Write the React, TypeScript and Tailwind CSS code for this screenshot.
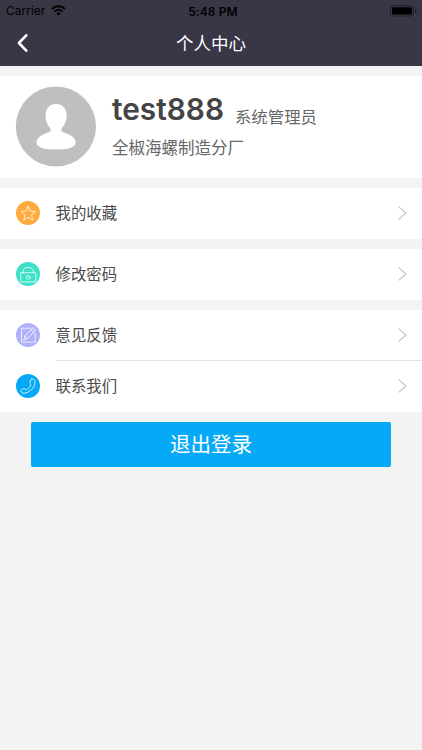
import { JSX, ReactNode } from "react";

type MenuRowProps = {
  label: string,
  color: string,
  icon: ReactNode,
};

function StatusBar() {
  return (
    <div className="flex h-[21px] items-center justify-between pl-1.5 pr-[5px] text-black">
      <div className="flex basis-1/3 items-center gap-1.5">
        <span className="pt-px text-[11.800px] leading-[21px] tracking-[0.1px]">Carrier</span>
        <svg className="h-[11px] w-[15px]" viewBox="0 0 15 11" fill="none" stroke="currentColor">
          <path d="M1 4a9.2 9.2 0 0 1 13 0" strokeWidth="2" />
          <path d="M3.5 6.5a5.7 5.7 0 0 1 8 0" strokeWidth="1.8" />
          <path d="M7.5 10.6 5.2 8.4a3.3 3.3 0 0 1 4.6 0Z" fill="currentColor" stroke="none" />
        </svg>
      </div>
      <span className="pl-[3px] pt-px text-[12px] font-semibold leading-[21px] tracking-[0.1px]">5:48 PM</span>
      <div className="flex basis-1/3 justify-end">
        <svg className="h-[12px] w-[27px]" viewBox="0 0 27 12">
          <rect x="0.5" y="0.8" width="23" height="10.2" rx="2.5" fill="none" stroke="#211f29" />
          <rect x="2" y="2.3" width="20" height="7.2" rx="1.2" fill="#000" />
          <path d="M25 4v4c1-.4 1.6-1.1 1.6-2S26 4.400 25 4Z" fill="#211f29" />
        </svg>
      </div>
    </div>
  )
}

function Header() {
  return (
    <header className="h-[65.500px] bg-[#393645]">
      <StatusBar />
      <div className="grid h-[44px] grid-cols-[60px_1fr_60px] items-center">
        <svg className="ml-[17px] h-[20px] w-[12px]" viewBox="0 0 12 20" fill="none" stroke="#fff" strokeWidth="2.6" strokeLinecap="round" strokeLinejoin="round">
          <path d="M9.300 2.300 1.900 10l7.400 7.700" />
        </svg>
        <h1 className="h-[44px] pt-px text-center text-[17.500px] leading-[44px] text-white">个人中心</h1>
      </div>
    </header>
  )
}

function Avatar() {
  return (
    <svg className="h-[81px] w-[81px] shrink-0" viewBox="0 0 81 81">
      <circle cx="40.900" cy="40.500" r="40.100" fill="#bfbfbf" />
      <path
        d="M41 18C34.500 18 30.500 22.700 30.500 29.500c0 5.500 1.800 9.200 4.300 12.300 1.500 2 1.200 3.600-.8 4.400C27.500 48.300 21.500 50.800 21.500 56.800c0 4.800 8 6.800 19.500 6.800S60.700 61.600 60.700 56.800c0-6-6.200-8.500-12.700-10.600-2-.8-2.300-2.400-.8-4.400 2.500-3.100 4.500-6.800 4.500-12.300C51.700 22.700 47.500 18 41 18Z"
        fill="#fff"
      />
    </svg>
  )
}

function Profile() {
  return (
    <section className="flex h-[102px] items-center gap-[16px] bg-white pl-[15px]">
      <Avatar />
      <div>
        <div className="flex items-end gap-[11px]">
          <span className="text-[29.800px] font-semibold leading-[39px] text-[#444]">test888</span>
          <span className="pb-px text-[16.400px] leading-[22px] text-[#666]">系统管理员</span>
        </div>
        <p className="mb-1 mt-[7px] text-[16.500px] leading-[24px] text-[#666]">全椒海螺制造分厂</p>
      </div>
    </section>
  )
}

function MenuRow({label, color, icon}: MenuRowProps) {
  return (
    <div className="flex h-[51px] items-center bg-white pl-[15.500px] pr-[15px]">
      <div className={`flex size-[24.500px] items-center justify-center rounded-full ${color}`}>
        <svg className="size-[24.500px]" viewBox="0 0 25 25" fill="none" stroke="#fff" strokeOpacity="0.8" strokeWidth="1" strokeLinejoin="round" strokeLinecap="round">
          {icon}
        </svg>
      </div>
      <span className="ml-[15.500px] grow pt-[2px] text-[15.400px] leading-[24px] text-[#4a4a4a]">{label}</span>
      <svg className="h-[14px] w-[9px]" viewBox="0 0 9 14" fill="none" stroke="#c3c4c8" strokeWidth="1.200">
        <path d="m.6.600 7.400 6.400-7.400 6.400" />
      </svg>
    </div>
  )
}

const starIcon: JSX.Element = (
  <path d="m12.500 5.500 2.100 4.800 5.200.5-3.900 3.500 1.100 5.100-4.500-2.600L8 19.400l1.100-5.100-3.900-3.500 5.200-.5Z" />
)

const lockIcon: JSX.Element = (
  <>
    <rect x="4.800" y="11" width="15.400" height="9.300" rx="0.600" />
    <path d="M7.300 11V9.500c0-2.500 2-4 5.200-4s5.200 1.500 5.200 4V11" />
    <circle cx="12.500" cy="15.700" r="1.900" />
  </>
)

const editIcon: JSX.Element = (
  <>
    <path d="M14.500 5.300H5.600v14.200h14V10.500" />
    <path d="m8.200 17 .9-3.800 8.300-8.600 2.700 2.600-8.200 8.700L8.200 17Z" />
    <path d="m15.400 6.700 2.700 2.600M9.100 13.200l2.800 2.700" />
  </>
)

const phoneIcon: JSX.Element = (
  <path d="M15.900 5.200c1.100-.6 2.700 0 3.200 1.300.9 2.900-.4 6.500-3 9.100-2.700 2.700-6.200 4.500-9 3.900-1.500-.3-2.600-1.900-2.100-3 .4-.9 3.100-1.900 4.100-1.400.7.400.8 1 1.400.9 1.300-.2 4.300-3.300 4.600-4.700.1-.7-.6-.9-.8-1.700-.3-1.100.6-3.900 1.600-4.400Z" />
)

export default function App() {
  return (
    <div className="min-h-screen w-full bg-[#f3f3f3] font-['Inter','Noto_Sans_CJK_SC',sans-serif]">
      <Header />
      <main className="flex flex-col gap-[10px] pt-[10px]">
        <Profile />
        <MenuRow label="我的收藏" color="bg-[#ffab40]" icon={starIcon} />
        <MenuRow label="修改密码" color="bg-[#3de0c8]" icon={lockIcon} />
        <section className="bg-white">
          <MenuRow label="意见反馈" color="bg-[#b0b0fa]" icon={editIcon} />
          <div className="-mt-px ml-[56px] h-px bg-[#e2e2e4]" />
          <MenuRow label="联系我们" color="bg-[#05a9f6]" icon={phoneIcon} />
        </section>
        <button className="mx-[31px] h-[45px] rounded-[2px] bg-[#05a9f6] pt-[2px] text-[20.500px] text-white">
          退出登录
        </button>
      </main>
    </div>
  )
}
